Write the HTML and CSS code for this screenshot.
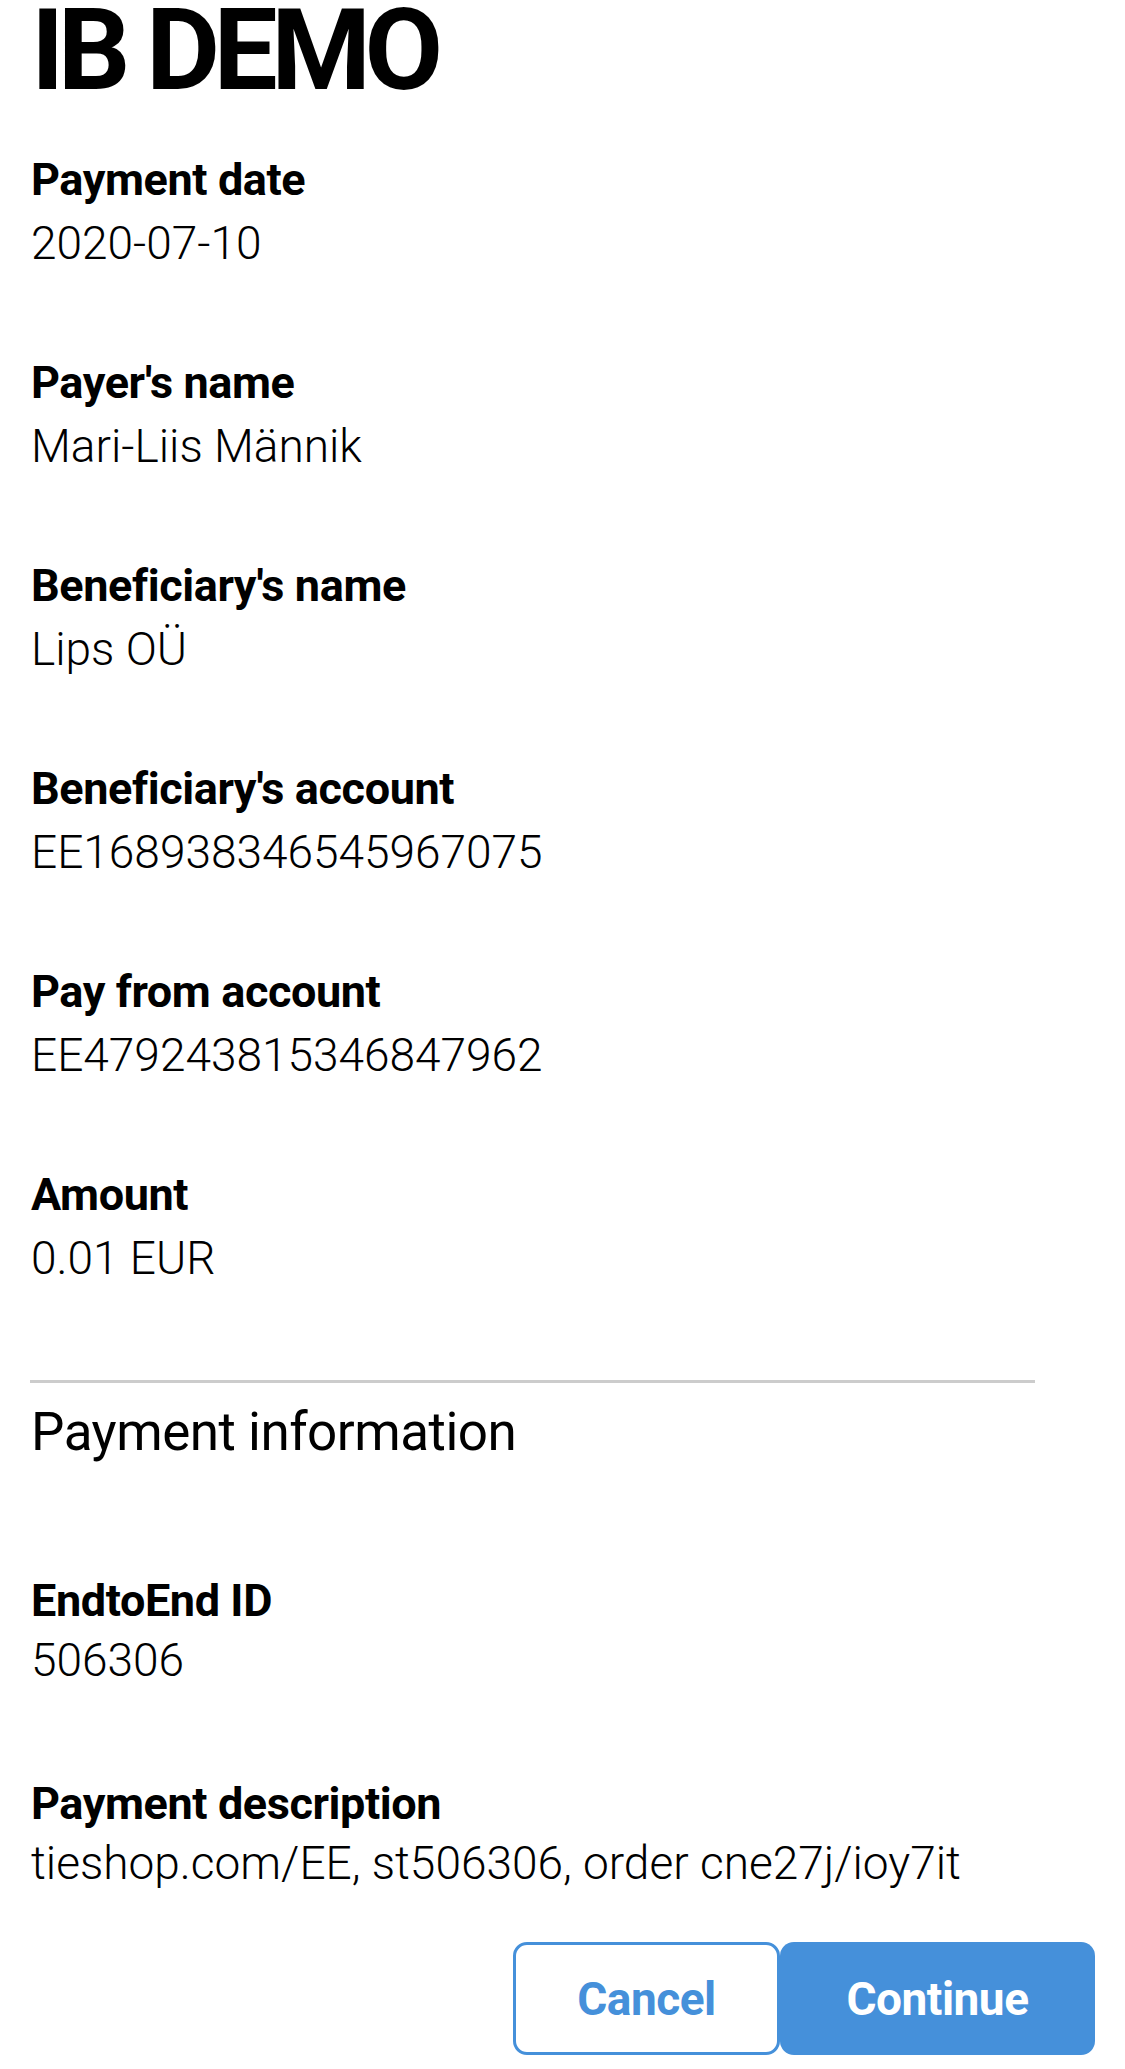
FILE: index.html
```html
<!DOCTYPE html>
<html lang="en">
<head>
<meta charset="utf-8">
<title>IB DEMO</title>
<link rel="stylesheet" href="styles.css">
</head>
<body>
<main class="page">
  <h1 class="title">IB DEMO</h1>
  <section class="fields">
    <div class="field"><div class="label">Payment date</div><div class="value">2020-07-10</div></div>
    <div class="field"><div class="label">Payer's name</div><div class="value">Mari-Liis Männik</div></div>
    <div class="field"><div class="label">Beneficiary's name</div><div class="value">Lips OÜ</div></div>
    <div class="field"><div class="label">Beneficiary's account</div><div class="value">EE168938346545967075</div></div>
    <div class="field"><div class="label">Pay from account</div><div class="value">EE479243815346847962</div></div>
    <div class="field"><div class="label">Amount</div><div class="value">0.01 EUR</div></div>
  </section>
  <hr class="divider">
  <h2 class="subtitle">Payment information</h2>
  <section class="fields info">
    <div class="field"><div class="label">EndtoEnd ID</div><div class="value">506306</div></div>
    <div class="field last"><div class="label">Payment description</div><div class="value">tieshop.com/EE, st506306, order cne27j/ioy7it</div></div>
  </section>
  <div class="actions">
    <button class="btn btn-cancel">Cancel</button>
    <button class="btn btn-continue">Continue</button>
  </div>
</main>
</body>
</html>
```
FILE: styles.css
```css
html, body {
  margin: 0;
  padding: 0;
  background: #ffffff;
}
body {
  font-family: Roboto, "Liberation Sans", Arial, sans-serif;
  color: #000;
}
.page {
  padding: 0 30px 0 31px;
}
.title {
  margin: 0 0 53px 0;
  font-size: 114px;
  line-height: 100px;
  font-weight: 700;
  letter-spacing: -6.5px;
}
.field {
  margin-bottom: 77px;
}
.label {
  font-size: 45px;
  line-height: 54px;
  font-weight: 700;
  letter-spacing: -0.4px;
}
.value {
  font-size: 46px;
  line-height: 72px;
  font-weight: 300;
}
.divider {
  margin: 86px 60px 0 -1px;
  border: 0;
  height: 3px;
  background: #cccccc;
}
.subtitle {
  margin: 17px 0 0 0;
  font-size: 53px;
  line-height: 64px;
  font-weight: 400;
  letter-spacing: -0.5px;
}
.info {
  margin-top: 110px;
}
.info .value {
  line-height: 64px;
}
.info .field {
  margin-bottom: 85px;
}
.info .field.last {
  margin-bottom: 47px;
}
.actions {
  display: flex;
  justify-content: flex-end;
}
.btn {
  height: 113px;
  border-radius: 14px;
  font-family: Roboto, "Liberation Sans", Arial, sans-serif;
  font-size: 46px;
  font-weight: 700;
  letter-spacing: -0.5px;
  cursor: pointer;
}
.btn-cancel {
  width: 267px;
  background: #ffffff;
  color: #4590da;
  border: 3px solid #4590da;
}
.btn-continue {
  width: 315px;
  background: #4590da;
  color: #ffffff;
  border: 0;
}
```
